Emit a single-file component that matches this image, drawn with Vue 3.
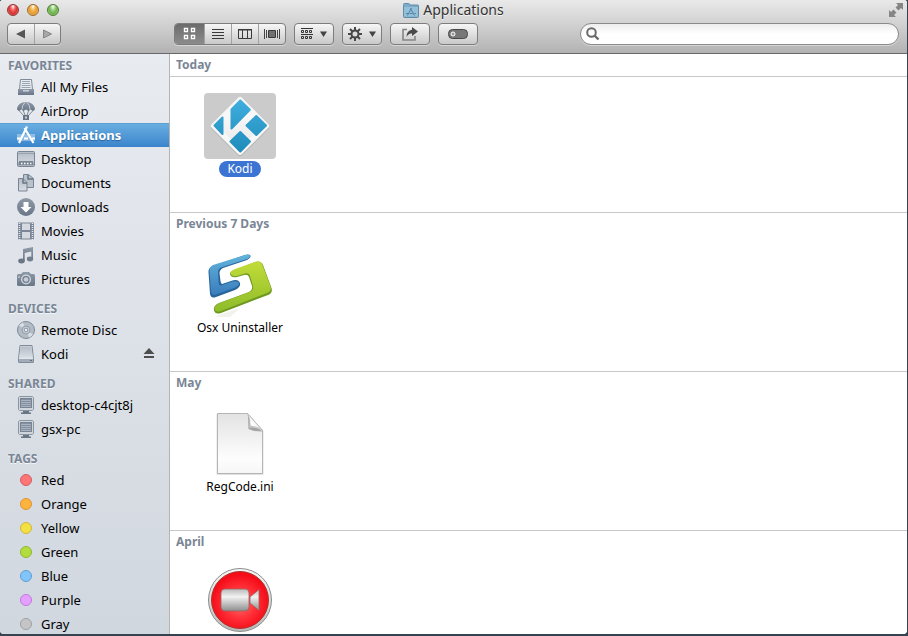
<script setup>
import { ref } from 'vue'

const current = ref('Applications')
const view = ref('icons')
const query = ref('')

const groups = [
  {
    title: 'FAVORITES',
    items: [
      { name: 'All My Files', icon: 'files' },
      { name: 'AirDrop', icon: 'airdrop' },
      { name: 'Applications', icon: 'apps' },
      { name: 'Desktop', icon: 'desktop' },
      { name: 'Documents', icon: 'documents' },
      { name: 'Downloads', icon: 'downloads' },
      { name: 'Movies', icon: 'movies' },
      { name: 'Music', icon: 'music' },
      { name: 'Pictures', icon: 'pictures' }
    ]
  },
  {
    title: 'DEVICES',
    items: [
      { name: 'Remote Disc', icon: 'disc' },
      { name: 'Kodi', icon: 'drive', eject: true }
    ]
  },
  {
    title: 'SHARED',
    items: [
      { name: 'desktop-c4cjt8j', icon: 'pc' },
      { name: 'gsx-pc', icon: 'pc' }
    ]
  },
  {
    title: 'TAGS',
    items: [
      { name: 'Red', tag: 'red' },
      { name: 'Orange', tag: 'orange' },
      { name: 'Yellow', tag: 'yellow' },
      { name: 'Green', tag: 'green' },
      { name: 'Blue', tag: 'blue' },
      { name: 'Purple', tag: 'purple' },
      { name: 'Gray', tag: 'gray' }
    ]
  }
]

const views = [
  { id: 'icons', label: 'Icon view' },
  { id: 'list', label: 'List view' },
  { id: 'columns', label: 'Column view' },
  { id: 'flow', label: 'Cover Flow view' }
]

const sections = [
  { title: 'Today', files: [{ name: 'Kodi', icon: 'kodi', selected: true }] },
  { title: 'Previous 7 Days', files: [{ name: 'Osx Uninstaller', icon: 'uninstaller' }] },
  { title: 'May', files: [{ name: 'RegCode.ini', icon: 'page' }] },
  { title: 'April', files: [{ name: '', icon: 'camera' }] }
]
</script>

<template>
  <svg class="defs" width="0" height="0" aria-hidden="true">
    <defs>
      <linearGradient id="slate" x1="0" y1="0" x2="0" y2="1"><stop offset="0" stop-color="#8f9aa8" /><stop offset="1" stop-color="#697686" /></linearGradient>
      <linearGradient id="pale" x1="0" y1="0" x2="0" y2="1"><stop offset="0" stop-color="#b4bcc6" /><stop offset="1" stop-color="#d9dee4" /></linearGradient>
      <linearGradient id="kodiBlue" x1="0" y1="0" x2="0" y2="66" gradientUnits="userSpaceOnUse"><stop offset="0" stop-color="#43b2e2" /><stop offset="1" stop-color="#1b87b6" /></linearGradient>
      <linearGradient id="kodiWhite" x1="0" y1="0" x2="0" y2="1"><stop offset="0" stop-color="#fff" /><stop offset="1" stop-color="#e6e6e6" /></linearGradient>
      <linearGradient id="uBlue" x1="0" y1="0" x2="0" y2="1"><stop offset="0" stop-color="#62b4dc" /><stop offset="1" stop-color="#3a7dbd" /></linearGradient>
      <linearGradient id="uGreen" x1="0" y1="0" x2="0" y2="1"><stop offset="0" stop-color="#c2dc38" /><stop offset="1" stop-color="#8ebc2a" /></linearGradient>
      <linearGradient id="paper" x1="0" y1="0" x2="0" y2="1"><stop offset="0" stop-color="#e3e3e3" /><stop offset="0.75" stop-color="#fdfdfd" /><stop offset="1" stop-color="#f6f6f6" /></linearGradient>
      <linearGradient id="fold" x1="0" y1="1" x2="0.6" y2="0.3"><stop offset="0" stop-color="#8c8c8c" /><stop offset="0.5" stop-color="#fff" /><stop offset="1" stop-color="#ececec" /></linearGradient>
      <linearGradient id="ring" x1="0" y1="0" x2="0" y2="1"><stop offset="0" stop-color="#f7f7f7" /><stop offset="1" stop-color="#b9b9b9" /></linearGradient>
      <radialGradient id="redDisc" cx="0.5" cy="0.55" r="0.5"><stop offset="0" stop-color="#ff7472" /><stop offset="0.55" stop-color="#ff3038" /><stop offset="1" stop-color="#f50c18" /></radialGradient>
      <linearGradient id="silver" x1="0" y1="0" x2="0" y2="1"><stop offset="0" stop-color="#b9b9b9" /><stop offset="0.35" stop-color="#f2f2f2" /><stop offset="1" stop-color="#8e8e8e" /></linearGradient>

      <symbol id="i-files" viewBox="0 0 18 18">
        <path d="M3.500 1.500h11l1 10h-13z" fill="#e8ebef" stroke="#7f8b99" />
        <path d="M5 3.500h8M5 5.500h8M4.500 7.500h9M4.500 9.500h9" stroke="#9aa4b0" />
        <path d="M1 11h16v5.500q0 .5-.5.5h-15q-.5 0-.5-.5z" fill="url(#slate)" />
        <path d="M6 12h6v1.500h-6z" fill="#c9d0d8" />
      </symbol>
      <symbol id="i-airdrop" viewBox="0 0 18 18">
        <path d="M1 7.500L7 14M17 7.500L11 14M6 8l2 5M12 8l-2 5" stroke="#7f8b99" fill="none" />
        <path d="M0 7.500C0 3 4 0 9 0s9 3 9 7.500L16 9l-2.500-1.500L11.500 9 9 7.500 6.500 9l-2-1.500L2 9z" fill="url(#slate)" />
        <path d="M5 7.500Q5 3 8 .5M13 7.500Q13 3 10 .5" stroke="#c6cdd6" fill="none" />
        <path d="M6 13h6v5H6z" fill="#697686" /><path d="M8 14.500h2v2H8z" fill="#c6cdd6" />
      </symbol>
      <symbol id="i-apps" viewBox="0 0 18 18">
        <path d="M0 8h18v7H0z" fill="#fff" opacity=".35" />
        <path d="M10 .5L2 17M7.500 2L16.500 17" stroke="#fff" stroke-width="2.200" fill="none" />
        <path d="M0 12.500h4M7 12.500h4M15 12.500h3" stroke="#fff" stroke-width="2" />
      </symbol>
      <symbol id="i-desktop" viewBox="0 0 18 18">
        <rect x=".5" y="1.500" width="17" height="15" rx="1" fill="url(#pale)" stroke="#798594" />
        <path d="M1 3.500h16" stroke="#9aa4b0" /><path d="M2 11h14l1 4.500H1z" fill="#7b8796" />
        <path d="M4 13.500h1.500M7 13.500h1.500M10 13.500h1.500M13 13.500h1.500" stroke="#fff" stroke-width="1.500" />
      </symbol>
      <symbol id="i-documents" viewBox="0 0 18 18">
        <path d="M6.500.5h5l5 4v9h-10z" fill="#b9c1cb" stroke="#798594" /><path d="M11 1v4h5" fill="none" stroke="#697686" stroke-width="1.500" />
        <path d="M1.500 4.500h4.500l4 4v8.500h-8.500z" fill="url(#pale)" stroke="#798594" /><path d="M6 5v4h4" fill="none" stroke="#697686" stroke-width="1.500" />
      </symbol>
      <symbol id="i-downloads" viewBox="0 0 18 18">
        <circle cx="9" cy="9" r="9" fill="url(#slate)" /><path d="M6.500 4h5v5H14.500L9 14.500 3.500 9h3z" fill="#fff" />
      </symbol>
      <symbol id="i-movies" viewBox="0 0 18 18">
        <path d="M1 .5h16v17H1z" fill="#7b8796" /><path d="M5 1.500h8v6.500H5zM5 10h8v6.500H5z" fill="#d5dae1" />
        <path d="M2.500 1v17M15.500 1v17" stroke="#e6e9ee" stroke-width="1.500" stroke-dasharray="1 1" />
      </symbol>
      <symbol id="i-music" viewBox="0 0 18 18">
        <path d="M6 3L16 1v12h-1.700V5.500L7.700 7v8H6z" fill="url(#slate)" />
        <ellipse cx="4.500" cy="15" rx="3.300" ry="2.400" fill="#697686" /><ellipse cx="13" cy="13" rx="3.200" ry="2.400" fill="#717e8d" />
      </symbol>
      <symbol id="i-pictures" viewBox="0 0 18 18">
        <path d="M1.500 4H4l2-2h6l2 2h2.500Q18 4 18 5.500v9q0 1.500-1.500 1.500h-15Q0 16 0 14.500v-9Q0 4 1.500 4z" fill="url(#slate)" />
        <circle cx="9" cy="9.500" r="5" fill="#d5dae1" /><circle cx="9" cy="9.500" r="3.700" fill="#798594" /><circle cx="9" cy="9.500" r="2.300" fill="#c6cdd6" />
        <path d="M1 7h2" stroke="#d5dae1" />
      </symbol>
      <symbol id="i-disc" viewBox="0 0 18 18">
        <circle cx="9" cy="9" r="8.500" fill="#b3bbc5" stroke="#7f8b99" /><path d="M9 9L2 4.500A8 8 0 0 1 6 1.600zM9 9l7 4.500a8 8 0 0 1-4 2.900z" fill="#d9dee4" />
        <circle cx="9" cy="9" r="4" fill="#c6cdd6" stroke="#929daa" /><circle cx="9" cy="9" r="1.800" fill="#eef0f4" stroke="#8a95a2" />
      </symbol>
      <symbol id="i-drive" viewBox="0 0 18 18">
        <path d="M3 .5h12l1.500 13v3.500q0 .5-.5.5H2q-.5 0-.5-.5V13.500z" fill="#e0e4e9" stroke="#7f8b99" />
        <path d="M3.500 1.500h11l1 11h-13z" fill="url(#pale)" /><path d="M2 14h14v3H2z" fill="#a2acb8" /><path d="M13 15.500h2" stroke="#5e6b7a" />
      </symbol>
      <symbol id="i-pc" viewBox="0 0 18 18">
        <path d="M2.500.5h13l1 1v12l-1 1h-13l-1-1v-12z" fill="#cfd5dc" stroke="#8a95a2" />
        <rect x="3.500" y="2.500" width="11" height="9" fill="#8490a0" stroke="#788493" />
        <path d="M4 4.500h10M4 6.500h10M4 8.500h10M4 10.500h10" stroke="#a8b1bc" />
        <path d="M6 15h6v1.500h2V18H4v-1.500h2z" fill="#697686" />
      </symbol>

      <symbol id="v-icons" viewBox="0 0 18 14">
        <path d="M3.500 1.500h3v3h-3zM10.500 1.500h3v3h-3zM3.500 8.500h3v3h-3zM10.500 8.500h3v3h-3z" fill="#666" stroke="#fff" stroke-width="1.400" />
      </symbol>
      <symbol id="v-list" viewBox="0 0 18 14"><path d="M3 2.500h12M3 5.500h12M3 8.500h12M3 11.500h12" stroke="#3a3a3a" /></symbol>
      <symbol id="v-columns" viewBox="0 0 18 14"><path d="M2.500 2.500h13v9h-13zM6.500 2.500v9M11.500 2.500v9" fill="none" stroke="#3a3a3a" /><path d="M2 2h14v1.500H2z" fill="#3a3a3a" /></symbol>
      <symbol id="v-flow" viewBox="0 0 18 14"><path d="M1.500 2v10M3.500 3v8M14.500 3v8M16.500 2v10" stroke="#444" /><path d="M5.500 3.500h7v7h-7z" fill="#707070" stroke="#3a3a3a" /></symbol>

      <symbol id="f-kodi" viewBox="0 0 72 66">
        <path d="M36 7L62 33 36 59 10 33z" transform="translate(0 1)" fill="#999" stroke="#999" stroke-width="6" stroke-linejoin="round" opacity=".6" />
        <path d="M36 7L62 33 36 59 10 33z" fill="url(#kodiWhite)" stroke="#f7f7f7" stroke-width="6" stroke-linejoin="round" />
        <g fill="url(#kodiBlue)" stroke="url(#kodiBlue)" stroke-width="2" stroke-linejoin="round">
          <path d="M36.300 7.500L45.800 16.800 27.500 35.500V16.500z" /><path d="M10.500 32.500L18.500 24.500V41z" />
          <path d="M52.300 23L62 32.500 52.300 42 42.500 32.500z" /><path d="M36.300 39L46 48.500 36.300 58.500 26.500 48.500z" />
        </g>
      </symbol>
      <symbol id="f-uninstaller" viewBox="0 0 72 66">
        <path d="M12 64L36 56l-10 9H14z" fill="#e9ece2" opacity=".7" />
        <g stroke-linejoin="round">
          <path d="M41 3L9 14Q4 16 4.500 20L6 42Q7 47 12 45L31 38Q37 35 36 31Q34 26 27 29L18 32Q17 32 16.500 29L15.500 21Q15.500 18 19 16L43 8Q48 5 46 3Q44 2 41 3z" fill="#28659b" />
          <path d="M41 3L9 13Q5 15 5.500 19L7 40Q8 44 12 42.500L30 36Q35.500 33.500 35 31Q33 28 27 30L17 33.500Q14.500 34 14.500 29L14 20Q14 17 17 15.500L43 7Q47 5 45.500 3Q44 2 41 3z" fill="url(#uBlue)" />
          <path d="M31 18L51 10Q57 8 59 13L67.500 36Q69 41 64 43L17 61Q11 63 10 58Q9 54 15 51L45 40Q49 38 48 34L45 25Q44 22 40 23L33 25Q27 26 26 22Q26 19 31 18z" fill="#6f981f" />
          <path d="M31 17L51 10Q56 8 58 12L66.500 34.500Q68 39 63 41L17 59Q12 61 10.500 57Q10 54 16 51L46 40Q50 38 49 34L46 24Q45 20.500 41 21.500L33 24Q28 25 26.500 21.500Q26 19 31 17z" fill="url(#uGreen)" />
        </g>
      </symbol>
      <symbol id="f-page" viewBox="0 0 72 66">
        <path d="M12.500 3h32L59.500 20v44h-47z" fill="#000" opacity=".12" />
        <path d="M13.500 2.500H43.500L58.500 19.500V62.500H13.500z" fill="url(#paper)" stroke="#b5b5b5" />
        <path d="M44 3Q46.500 8 45.500 16.500Q54 15.500 58.500 20.500L50 20 44.500 18z" fill="#777" opacity=".6" />
        <path d="M43.500 2.500Q46.500 8 46 15.500Q54 15 58.500 19.500z" fill="url(#fold)" stroke="#b0b0b0" stroke-width=".7" />
      </symbol>
      <symbol id="f-camera" viewBox="0 0 72 66" overflow="visible">
        <circle cx="36" cy="30" r="31.500" fill="url(#ring)" stroke="#8c8c8c" /><circle cx="36" cy="30" r="28.500" fill="url(#redDisc)" stroke="#a8392f" />
        <rect x="17" y="19" width="28" height="22" rx="4" fill="url(#silver)" stroke="#a06060" stroke-width=".8" />
        <path d="M46 27L55 19.500V40.500L46 33z" fill="url(#silver)" stroke="#a06060" stroke-width=".8" />
      </symbol>
    </defs>
  </svg>

  <div class="window">
    <header class="toolbar">
      <div class="titlebar">
        <div class="lights">
          <button class="light close" aria-label="Close"></button>
          <button class="light minimize" aria-label="Minimize"></button>
          <button class="light zoom" aria-label="Zoom"></button>
        </div>
        <h1 class="title">
          <svg width="16" height="15" viewBox="0 0 16 15" aria-hidden="true">
            <path d="M.5 2.500V1.500q0-1 1-1h4q1 0 1 1v.5h8q1 0 1 1v10.500q0 1-1 1h-13q-1 0-1-1z" fill="#7dacc8" stroke="#5d8ba8" />
            <path d="M1 4h14v9.500H1z" fill="#94bfd8" />
            <path d="M8.500 5L4.500 12.500M7.500 5.500L11.500 12.500M3 10.500h3M7 10.500h2.500M11.500 10.500h1.500" stroke="#4e82a6" fill="none" />
          </svg>
          <span>Applications</span>
        </h1>
        <button class="expand" aria-label="Full screen">
          <svg width="14" height="14" viewBox="0 0 14 14" aria-hidden="true">
            <path d="M7 0h7v7l-2-2-2.500 2.500L6.500 4.500 9 2zM0 7l2 2 2.500-2.500L7.500 9.500 5 12l2 2H0z" fill="#858585" />
            <path d="M4.500 4.500l5 5" stroke="#dedede" stroke-width="1.500" />
          </svg>
        </button>
      </div>
      <div class="tools">
        <div class="nav">
          <div class="segmented">
            <button class="arrow" aria-label="Back"><svg width="10" height="10" viewBox="0 0 10 10"><path d="M9 .5V9.500L0 5z" fill="#555" /></svg></button>
            <button class="arrow" aria-label="Forward"><svg width="10" height="10" viewBox="0 0 10 10"><path d="M.5 1V9L8.500 5z" fill="#a8a8a8" stroke="#858585" /></svg></button>
          </div>
        </div>
        <div class="segmented views">
          <button v-for="v in views" :key="v.id" :class="{ on: view === v.id }" :aria-label="v.label" @click="view = v.id">
            <svg width="18" height="14" aria-hidden="true"><use :href="'#v-' + v.id" /></svg>
          </button>
        </div>
        <button class="tool" aria-label="Arrange by">
          <svg width="26" height="14" viewBox="0 0 26 14" aria-hidden="true">
            <path d="M0 1.500h12M0 7.500h12" stroke="#333" />
            <path d="M.5 3.500h2v2h-2zM4.500 3.500h2v2h-2zM8.500 3.500h2v2h-2zM.5 9.500h2v2h-2zM4.500 9.500h2v2h-2zM8.500 9.500h2v2h-2z" fill="none" stroke="#333" />
            <path d="M19 4.500h7L22.500 10z" fill="#444" />
          </svg>
        </button>
        <button class="tool" aria-label="Actions">
          <svg width="28" height="14" viewBox="0 0 28 14" aria-hidden="true">
            <path d="M7 0v14M0 7h14M2 2l10 10M12 2L2 12" stroke="#484848" stroke-width="2" />
            <circle cx="7" cy="7" r="3.500" fill="#ddd" stroke="#484848" stroke-width="2" />
            <path d="M21 4.500h7L24.500 10z" fill="#444" />
          </svg>
        </button>
        <button class="tool" aria-label="Share">
          <svg width="16" height="14" viewBox="0 0 16 14" aria-hidden="true">
            <path d="M5 2.500H1V13h12V9" fill="none" stroke="#858585" stroke-width="1.600" />
            <path d="M10 0l6 4.500L10 9V6.500Q6.500 6 4.500 10Q4.500 3.500 10 2.800z" fill="#4a4a4a" />
          </svg>
        </button>
        <button class="tool" aria-label="Edit tags">
          <svg width="20" height="10" viewBox="0 0 20 10" aria-hidden="true">
            <rect x=".5" y=".5" width="19" height="9" rx="4" fill="#777" stroke="#484848" /><circle cx="5" cy="5" r="2" fill="#999" stroke="#fff" />
          </svg>
        </button>
        <label class="search">
          <svg width="14" height="14" viewBox="0 0 14 14" aria-hidden="true"><circle cx="5.500" cy="5.500" r="4.300" fill="none" stroke="#6a6a6a" stroke-width="2" /><path d="M8.500 8.500L12.500 12.500" stroke="#6a6a6a" stroke-width="2.400" /></svg>
          <input v-model="query" type="search" aria-label="Search" />
        </label>
      </div>
    </header>

    <div class="body">
      <nav class="sidebar">
        <section v-for="g in groups" :key="g.title" class="group">
          <h2>{{ g.title }}</h2>
          <a v-for="i in g.items" :key="i.name" href="#" :class="{ current: current === i.name }" @click.prevent="current = i.name">
            <span v-if="i.tag" class="dot" :class="i.tag"></span>
            <svg v-else class="glyph" width="18" height="18" aria-hidden="true"><use :href="'#i-' + i.icon" /></svg>
            <span class="name">{{ i.name }}</span>
            <svg v-if="i.eject" width="12" height="12" viewBox="0 0 12 12" aria-label="Eject"><path d="M6 0L11.500 6H.5zM1 8h10v2H1z" fill="#4d4d4d" /></svg>
          </a>
        </section>
      </nav>
      <main class="content">
        <section v-for="s in sections" :key="s.title" class="shelf">
          <h2>{{ s.title }}</h2>
          <div class="files">
            <figure v-for="f in s.files" :key="f.icon" :class="{ selected: f.selected }">
              <svg width="72" height="66" aria-hidden="true"><use :href="'#f-' + f.icon" /></svg>
              <figcaption v-if="f.name">{{ f.name }}</figcaption>
            </figure>
          </div>
        </section>
      </main>
    </div>
  </div>
</template>

<style>
body {
  margin: 0;
  background: #35424f;
}
</style>

<style scoped>
* {
  box-sizing: border-box;
}
.defs {
  position: absolute;
}
.window {
  display: flex;
  flex-direction: column;
  height: calc(100vh - 2px);
  margin-right: 1px;
  overflow: hidden;
  border-radius: 3px 3px 4px 4px;
  background: #fff;
  font: 13px/20px "Noto Sans", "Open Sans", sans-serif;
  color: #000;
}
button {
  display: flex;
  align-items: center;
  justify-content: center;
  margin: 0;
  padding: 0;
  border: 0;
  background: none;
}
h1, h2, figure {
  margin: 0;
}
.toolbar {
  flex: none;
  height: 54px;
  border-bottom: 1px solid #686868;
  background: linear-gradient(#e9e9e9, #cfcfcf 50%, #b2b2b2);
}
.titlebar {
  display: grid;
  grid-template-columns: 1fr auto 1fr;
  align-items: center;
  height: 23px;
  padding: 0 4px 3px;
}
.lights {
  display: flex;
  gap: 8px;
  padding-left: 3px;
}
.light {
  width: 12px;
  height: 12px;
  border: 1px solid;
  border-radius: 50%;
}
.close {
  border-color: #8e3634;
  background: radial-gradient(ellipse at 50% 15%, #fff 0, #f26b68 30%, #d8302f 60%, #ff9d97);
}
.minimize {
  border-color: #98692c;
  background: radial-gradient(ellipse at 50% 15%, #fff 0, #f5bd60 30%, #e5992f 60%, #ffe98c);
}
.zoom {
  border-color: #4c7a36;
  background: radial-gradient(ellipse at 50% 15%, #fff 0, #a0d483 30%, #6bb04c 60%, #cdf7a0);
}
.title {
  display: flex;
  align-items: center;
  gap: 4px;
  font-size: 14px;
  font-weight: 400;
  color: #333;
  text-shadow: 0 1px 0 #f4f4f4;
}
.expand {
  justify-self: end;
}
.tools {
  display: flex;
  gap: 8px;
  height: 22px;
  padding: 0 8px 0 7px;
}
.nav {
  flex: none;
  width: 159px;
}
.segmented {
  display: flex;
  width: max-content;
  height: 22px;
  border: 1px solid #7d7d7d;
  border-radius: 4px;
  background: linear-gradient(#f6f6f6, #c9c9c9);
  box-shadow: 0 1px 0 #d6d6d6;
  overflow: hidden;
}
.segmented button + button {
  border-left: 1px solid #a2a2a2;
}
.arrow {
  width: 26px;
}
.views button {
  width: 27px;
}
.views button:first-child {
  width: 29px;
}
.views .on {
  background: linear-gradient(#6b6b6b, #8c8c8c);
}
.tool {
  flex: none;
  width: 40px;
  height: 22px;
  border: 1px solid #7d7d7d;
  border-radius: 4px;
  background: linear-gradient(#f6f6f6, #c9c9c9);
  box-shadow: 0 1px 0 #d6d6d6;
}
.search {
  display: flex;
  flex: 1;
  align-items: center;
  gap: 6px;
  margin-left: 94px;
  padding: 0 10px 0 5px;
  border: 1px solid #8a8a8a;
  border-radius: 11px;
  background: linear-gradient(#eee, #fff 50%);
  box-shadow: 0 1px 0 #d6d6d6;
}
.search input {
  flex: 1;
  min-width: 0;
  padding: 0;
  border: 0;
  outline: 0;
  background: none;
  font: inherit;
}
.body {
  display: flex;
  flex: 1;
  min-height: 0;
}
.sidebar {
  flex: none;
  width: 170px;
  padding-top: 3px;
  overflow: hidden;
  border-right: 1px solid #b4b4b4;
  background: linear-gradient(#e8ebf0, #d1d7df);
}
.group {
  margin-bottom: 9px;
}
h2 {
  font-size: 12px;
  font-weight: 700;
  color: #7a8695;
}
.group h2 {
  padding-left: 8px;
  line-height: 18px;
  text-shadow: 0 1px 0 #f4f6f9;
}
.group a {
  display: flex;
  align-items: center;
  gap: 6px;
  height: 24px;
  padding: 0 14px 0 17px;
  color: #000;
  text-decoration: none;
  white-space: nowrap;
}
.group .current {
  background: linear-gradient(#6bb0e2, #3a84cc);
  box-shadow: inset 0 1px 0 #5c9fd5;
  color: #fff;
  font-weight: 700;
  text-shadow: 0 1px 1px #2c6299;
}
.glyph {
  flex: none;
}
.name {
  flex: 1;
}
.dot {
  flex: none;
  width: 12px;
  height: 12px;
  margin: 0 3px;
  border: 1px solid;
  border-radius: 50%;
}
.red { background: #fc7577; border-color: #d65c60; }
.orange { background: #fdb43e; border-color: #e0922c; }
.yellow { background: #f3e044; border-color: #cdb93a; }
.green { background: #b3dc3c; border-color: #8fb730; }
.blue { background: #82c5fb; border-color: #5c9fd3; }
.purple { background: #e3a0fc; border-color: #c377e2; }
.gray { background: #c5c5c5; border-color: #a0a0a0; }
.content {
  flex: 1;
  min-width: 0;
  overflow: hidden;
  background: #fff;
}
.shelf {
  height: 159px;
  border-top: 1px solid #c8c8c8;
}
.shelf:first-child {
  height: 158px;
  border-top: 0;
}
.shelf h2 {
  height: 23px;
  padding-left: 6px;
  line-height: 22px;
}
.shelf:first-child h2 {
  border-bottom: 1px solid #c8c8c8;
}
.files {
  display: grid;
  grid-template-columns: repeat(auto-fill, 112px);
  padding: 16px 14px 0;
}
figure {
  display: flex;
  flex-direction: column;
  align-items: center;
  gap: 2px;
}
figure svg {
  overflow: visible;
}
figcaption {
  padding: 0 8px;
  border-radius: 8px;
  font-size: 12px;
  line-height: 16px;
}
.selected svg {
  border-radius: 4px;
  background: #cbcbcb;
}
.selected figcaption {
  background: #3b74d3;
  color: #fff;
}
</style>
